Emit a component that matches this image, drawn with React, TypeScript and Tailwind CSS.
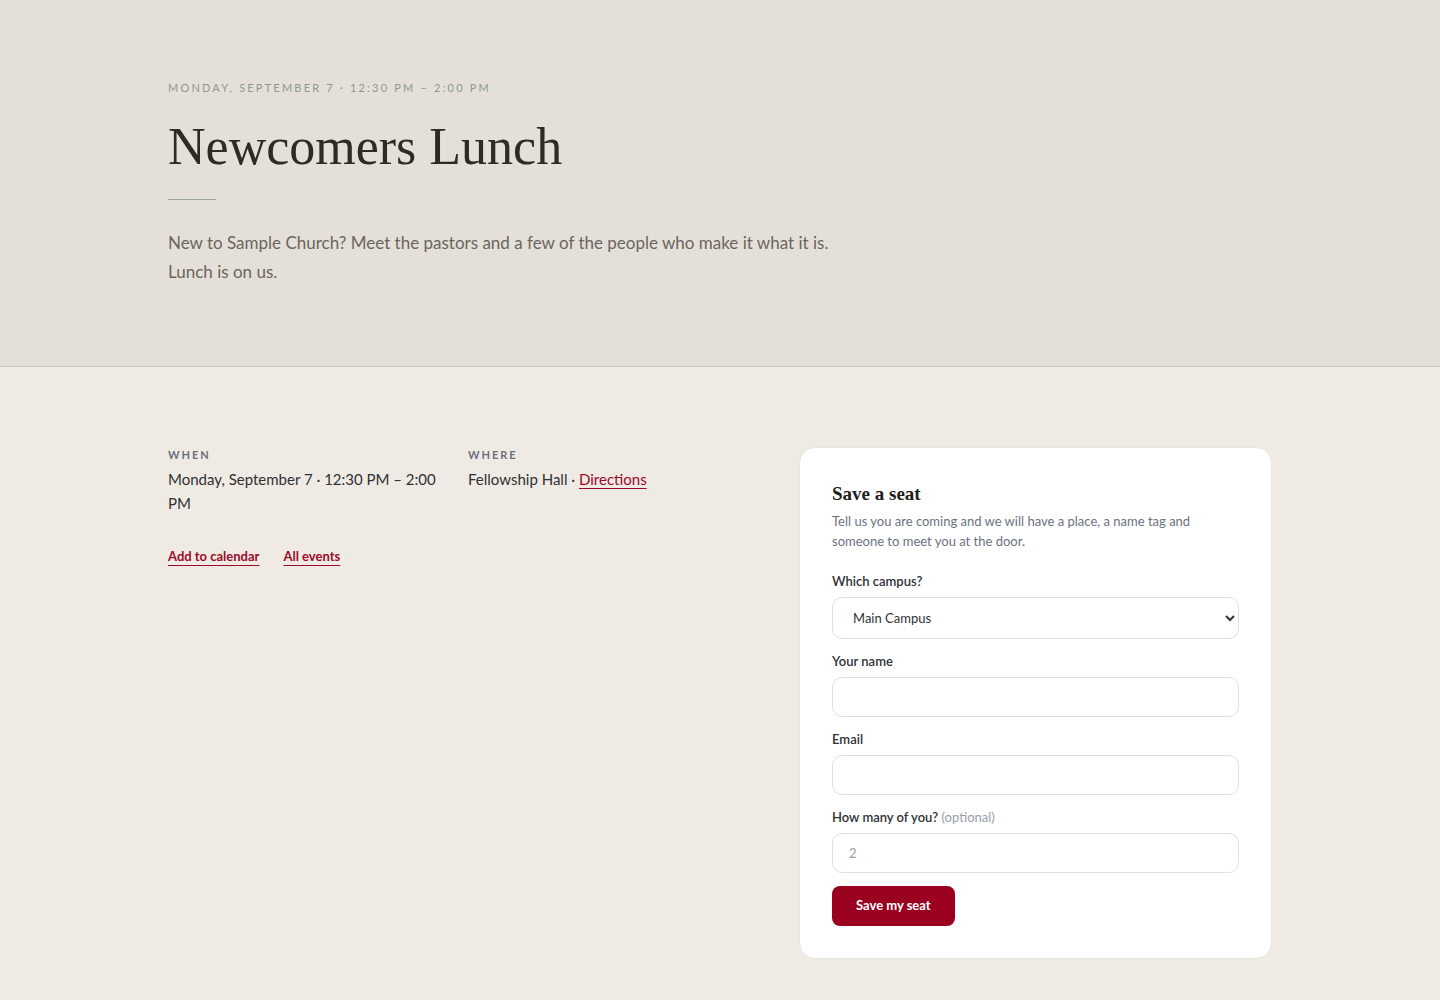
import React from "react";

const sans = { fontFamily: '"Lato", "Noto Sans", sans-serif' };
const serif = { fontFamily: '"Liberation Serif", "DejaVu Serif", serif' };

function Field({ label, hint, children }: { label: string; hint?: string; children: React.ReactNode }) {
  return (
    <div className="flex flex-col">
      <label className="text-[13px] leading-5 font-semibold text-[#2f3237] mb-[6px]">
        {label}
        {hint && <span className="font-normal text-[#9a9ea6]"> {hint}</span>}
      </label>
      {children}
    </div>
  );
}

export default function App() {
  return (
    <div className="min-h-[1000px] bg-[#efebe4] text-[#2c2b29]" style={sans}>
      {/* Hero */}
      <header className="bg-[#e4e0d9] border-b border-[#cfc9c0]">
        <div className="max-w-[1104px] mx-auto pt-20 pb-[80px]">
          <p className="text-[11px] leading-4 uppercase tracking-[0.2em] text-[#8e9a8b]">
            Monday, September 7 · 12:30 PM – 2:00 PM
          </p>
          <h1 className="mt-[22px] text-[52px] leading-[58px] text-[#2e2a25]" style={serif}>
            Newcomers Lunch
          </h1>
          <div className="mt-[23px] w-12 h-px bg-[#9aa597]" />
          <p className="mt-[28px] max-w-[670px] text-[17px] leading-[29px] text-[#6b655e]">
            New to Sample Church? Meet the pastors and a few of the people who make it what it is. Lunch is on us.
          </p>
        </div>
      </header>

      {/* Body */}
      <main className="max-w-[1104px] mx-auto pt-20 pb-10 flex gap-[30px]">
        <section className="flex-1 pt-px">
          <div className="flex gap-8">
            <div className="w-[268px]">
              <h2 className="text-[11px] leading-[14px] font-bold uppercase tracking-[0.18em] text-[#6c707c] mb-[5px]">When</h2>
              <p className="text-[15px] leading-6 text-[#2f3033]">Monday, September 7 · 12:30 PM – 2:00 PM</p>
            </div>
            <div className="w-[268px]">
              <h2 className="text-[11px] leading-[14px] font-bold uppercase tracking-[0.18em] text-[#6c707c] mb-[5px]">Where</h2>
              <p className="text-[15px] leading-6 text-[#2f3033]">
                Fellowship Hall ·{" "}
                <a href="#" className="text-[#9b0a26] underline underline-offset-[3px] decoration-1">Directions</a>
              </p>
            </div>
          </div>
          <div className="mt-[31px] flex gap-6 text-[13px] leading-5 font-bold">
            <a href="#" className="text-[#9b0a26] underline underline-offset-[4px] decoration-1">Add to calendar</a>
            <a href="#" className="text-[#9b0a26] underline underline-offset-[4px] decoration-1">All events</a>
          </div>
        </section>

        <aside className="w-[473px] shrink-0 bg-white rounded-2xl border border-[#e9e5de] px-8 pt-8 pb-8">
          <h3 className="text-[19px] leading-7 font-bold text-[#1f1d1a]" style={serif}>Save a seat</h3>
          <p className="mt-[3px] text-[13px] leading-5 text-[#6b7280]">
            Tell us you are coming and we will have a place, a name tag and someone to meet you at the door.
          </p>
          <form className="mt-5 flex flex-col gap-3" onSubmit={(e) => e.preventDefault()}>
            <Field label="Which campus?">
              <select className="h-[42px] w-full rounded-[10px] border border-[#e3e0da] bg-white px-4 text-[13px] text-[#2f3237]">
                <option>Main Campus</option>
                <option>North Campus</option>
              </select>
            </Field>
            <Field label="Your name">
              <input type="text" className="h-10 w-full rounded-[10px] border border-[#e3e0da] bg-white px-4 text-[13px]" />
            </Field>
            <Field label="Email">
              <input type="email" className="h-10 w-full rounded-[10px] border border-[#e3e0da] bg-white px-4 text-[13px]" />
            </Field>
            <Field label="How many of you?" hint="(optional)">
              <input
                type="number"
                placeholder="2"
                className="h-10 w-full rounded-[10px] border border-[#e3e0da] bg-white px-4 text-[13px] placeholder:text-[#9a9ea6]"
              />
            </Field>
            <div className="pt-px">
              <button type="submit" className="h-10 px-6 rounded-lg bg-[#9b0020] text-white text-[13px] font-bold">
                Save my seat
              </button>
            </div>
          </form>
        </aside>
      </main>
    </div>
  );
}
